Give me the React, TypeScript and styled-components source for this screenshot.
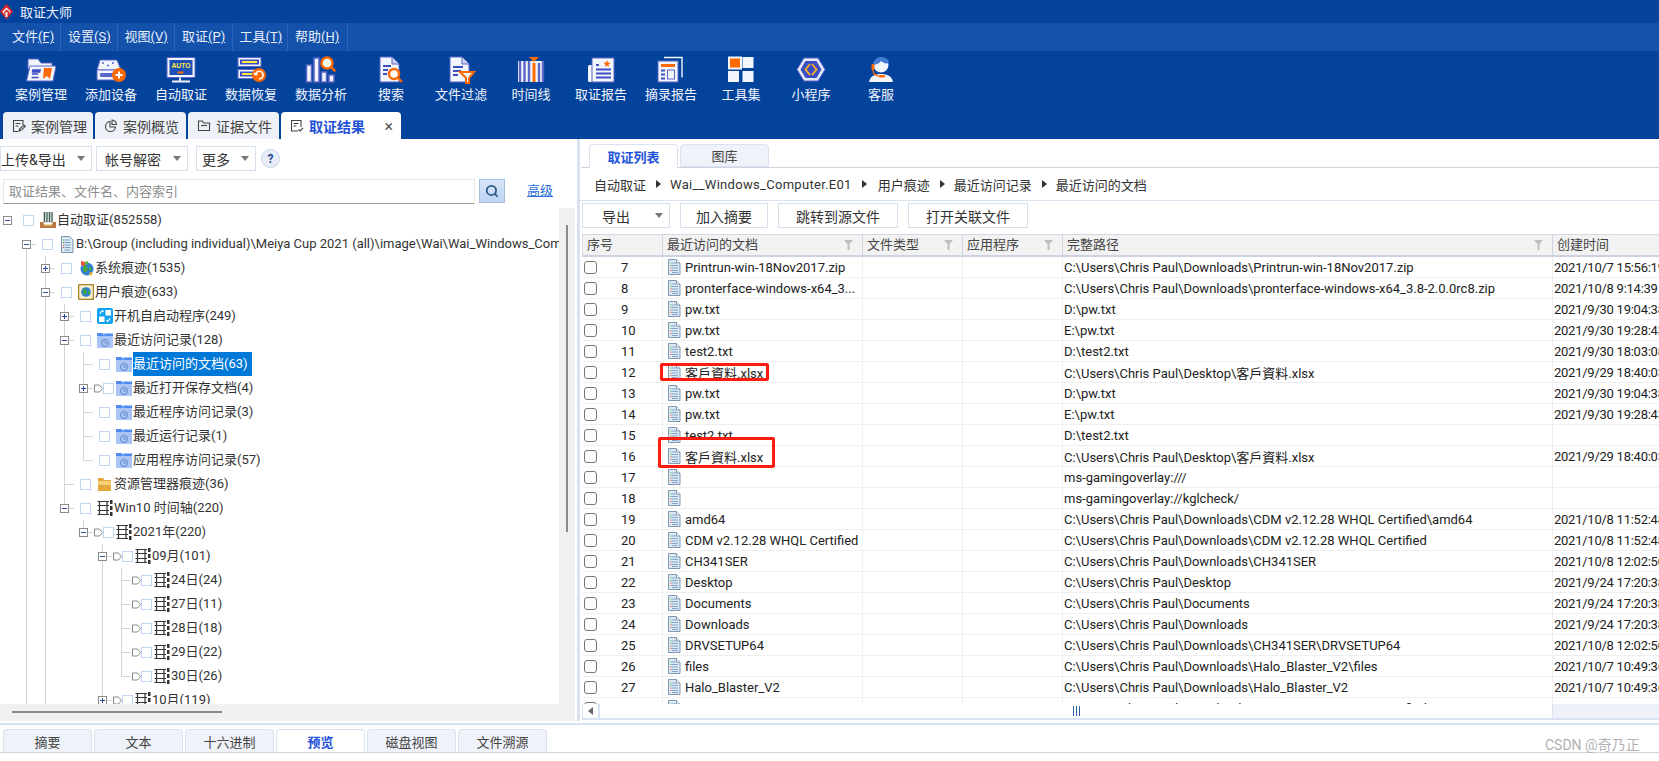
import React from "react";
import styled, { createGlobalStyle } from "styled-components";
import { Search } from "lucide-react";

const FONT = `Roboto, "Noto Sans CJK SC", sans-serif`;
const W = "#f3f5fd";
const I = "#5a66c8";
const D = "#3c4ec4";
const O = "#ff6a00";

const Global = createGlobalStyle`
  html, body { margin: 0; padding: 0; background: #fff; }
  body { font-family: ${FONT}; font-size: 13px; color: #333; }
  * { box-sizing: border-box; }
`;

const Page = styled.div`
  position: relative;
  width: 1659px;
  height: 761px;
  overflow: hidden;
  display: flex;
  flex-direction: column;
  background: #fff;
`;
const TitleBar = styled.div`
  height: 23px;
  background: #03439c;
  color: #eef2fb;
  display: flex;
  align-items: center;
  font-size: 13px;
`;
const TitleText = styled.span`
  margin-left: 7px;
`;
const MenuBar = styled.div`
  height: 28px;
  background: #1351ab;
  display: flex;
  padding-left: 5px;
`;
const MenuItem = styled.div`
  padding: 0 7px;
  line-height: 28px;
  color: #eaf0fc;
  font-size: 13px;
  border-right: 1px solid #2b64b8;
  white-space: nowrap;
  width: ${(p: { $w: number }) => p.$w}px;
`;
const ToolBar = styled.div`
  height: 61px;
  background: #03439c;
  display: flex;
  padding: 4px 0 0 6px;
`;
const ToolButton = styled.div`
  width: 70px;
  display: flex;
  flex-direction: column;
  align-items: center;
`;
const ToolLabel = styled.span`
  margin-top: 2px;
  color: #f2f5fd;
  font-size: 13px;
  line-height: 18px;
`;
const TabStrip = styled.div`
  height: 27px;
  background: #03439c;
  display: flex;
  gap: 2px;
  padding-left: 3px;
`;
const TopTab = styled.div<{ $active?: boolean; $w: number }>`
  width: ${(p) => p.$w}px;
  background: ${(p) => (p.$active ? "#fff" : "#eef1f7")};
  border-radius: 4px 4px 0 0;
  display: flex;
  align-items: center;
  padding: 1px 0 0 9px;
  gap: 5px;
  font-size: 14px;
  font-weight: ${(p) => (p.$active ? 700 : 400)};
  color: ${(p) => (p.$active ? "#1f52d8" : "#444")};
`;
const CloseMark = styled.span`
  margin-left: auto;
  margin-right: 8px;
  font-weight: 400;
  color: #555;
  font-size: 16px;
`;
const Main = styled.div`
  height: 582px;
  display: flex;
`;
const LeftPanel = styled.div`
  width: 577px;
  display: flex;
  flex-direction: column;
  flex: none;
`;
const Splitter = styled.div`
  width: 3px;
  flex: none;
  background: #d8e2f3;
`;
const LeftTools = styled.div`
  display: flex;
  align-items: center;
  margin-top: 7px;
  height: 25px;
`;
const Drop = styled.div<{ $w: number; $ml: number; $pl: number }>`
  width: ${(p) => p.$w}px;
  margin-left: ${(p) => p.$ml}px;
  padding-left: ${(p) => p.$pl}px;
  height: 25px;
  border: 1px solid #d5dfee;
  display: flex;
  align-items: center;
  font-size: 14px;
  color: #333;
  white-space: nowrap;
`;
const Caret = styled.i`
  margin-left: auto;
  margin-right: 6px;
  width: 0;
  height: 0;
  border-left: 4.5px solid transparent;
  border-right: 4.5px solid transparent;
  border-top: 5px solid #777;
`;
const HelpBtn = styled.div`
  width: 19px;
  height: 19px;
  margin-left: 5px;
  border-radius: 50%;
  background: #e8eef8;
  border: 1px solid #c6d3e8;
  color: #234a8c;
  font-weight: 700;
  font-size: 12px;
  display: flex;
  align-items: center;
  justify-content: center;
`;
const SearchRow = styled.div`
  display: flex;
  align-items: flex-start;
  margin-top: 8px;
  height: 25px;
  padding-left: 3px;
`;
const SearchInput = styled.input`
  width: 472px;
  height: 25px;
  border: 1px solid #e6e6e6;
  border-bottom-color: #9a9a9a;
  padding: 0 5px;
  font: 13px ${FONT};
  outline: none;
  &::placeholder { color: #8d8d8d; opacity: 1; }
`;
const SearchBtn = styled.div`
  width: 26px;
  height: 24px;
  margin-left: 4px;
  border: 1px solid #a3bfe0;
  background: linear-gradient(#d9e6f8, #bdd3f2);
  color: #2c5a88;
  display: flex;
  align-items: center;
  justify-content: center;
`;
const AdvancedLink = styled.a`
  margin-left: 22px;
  color: #2a6fd8;
  font-size: 13px;
  line-height: 24px;
  text-decoration: underline;
`;
const TreeArea = styled.div`
  margin-top: 4px;
  display: flex;
  height: 496px;
`;
const TreeView = styled.div`
  width: 559px;
  overflow: hidden;
  flex: none;
`;
const VTrack = styled.div`
  width: 16px;
  background: #f0f0f0;
  padding: 17px 0 0 7px;
`;
const VThumb = styled.div`
  width: 2px;
  height: 307px;
  background: #8a8a8a;
`;
const HTrack = styled.div`
  width: 575px;
  height: 17px;
  background: #f0f0f0;
  padding: 7px 0 0 12px;
`;
const HThumb = styled.div`
  width: 210px;
  height: 2px;
  background: #8a8a8a;
`;
const TreeRow = styled.div<{ $level: number }>`
  position: relative;
  height: 24px;
  display: flex;
  align-items: center;
  padding-left: ${(p) => 3 + p.$level * 19}px;
  white-space: nowrap;
  color: #333;
`;
const Guide = styled.i<{ $part: "full" | "top" | "bottom" }>`
  position: absolute;
  width: 1px;
  background: #d6d6d6;
  top: ${(p) => (p.$part === "bottom" ? "12px" : "0")};
  bottom: ${(p) => (p.$part === "top" ? "12px" : "0")};
`;
const Tick = styled.i`
  position: absolute;
  top: 12px;
  width: 10px;
  height: 1px;
  background: #d6d6d6;
`;
const Expander = styled.span<{ $open?: boolean; $hidden?: boolean }>`
  position: relative;
  width: 9px;
  height: 9px;
  flex: none;
  border: 1px solid ${(p) => (p.$hidden ? "transparent" : "#8a8a8a")};
  background: ${(p) => (p.$hidden ? "transparent" : "#fff")};
  &::before {
    content: "";
    display: ${(p) => (p.$hidden ? "none" : "block")};
    position: absolute;
    left: 1px;
    top: 3px;
    width: 5px;
    height: 1px;
    background: #2d4a9e;
  }
  &::after {
    content: "";
    display: ${(p) => (p.$hidden || p.$open ? "none" : "block")};
    position: absolute;
    left: 3px;
    top: 1px;
    width: 1px;
    height: 5px;
    background: #2d4a9e;
  }
`;
const TreeCheck = styled.span<{ $tagged?: boolean }>`
  position: relative;
  width: 11px;
  height: 11px;
  flex: none;
  background: #fff;
  border: 1px solid #c3d4f6;
  margin-left: ${(p) => (p.$tagged ? 0 : 11)}px;
  margin-right: ${(p) => (p.$tagged ? 2 : 6)}px;
`;
const TagSlot = styled.span`
  position: relative;
  width: 9px;
  height: 9px;
  margin-left: 6px;
  display: flex;
  flex: none;
`;
const NodeIcon = styled.span`
  position: relative;
  width: 16px;
  height: 16px;
  flex: none;
  display: flex;
`;
const NodeLabel = styled.span<{ $selected?: boolean }>`
  position: relative;
  margin-left: 1px;
  height: 24px;
  line-height: 24px;
  padding-right: ${(p) => (p.$selected ? 4 : 0)}px;
  background: ${(p) => (p.$selected ? "#0078d7" : "transparent")};
  color: ${(p) => (p.$selected ? "#fff" : "#333")};
`;
const RightPanel = styled.div`
  flex: 1;
  min-width: 0;
  display: flex;
  flex-direction: column;
`;
const SubTabs = styled.div`
  margin-top: 5px;
  height: 24px;
  display: flex;
  gap: 2px;
  padding-left: 8px;
  margin-left: 1px;
  border-bottom: 1px solid #cfd3df;
`;
const SubTab = styled.div<{ $active?: boolean }>`
  width: 89px;
  height: ${(p) => (p.$active ? 24 : 23)}px;
  border: 1px solid #d8e2f0;
  border-bottom: ${(p) => (p.$active ? "none" : "1px solid #d8e2f0")};
  border-radius: 4px 4px 0 0;
  background: ${(p) => (p.$active ? "#fff" : "#eff2f8")};
  color: ${(p) => (p.$active ? "#1f52d8" : "#444")};
  font-weight: ${(p) => (p.$active ? 700 : 400)};
  display: flex;
  align-items: center;
  justify-content: center;
`;
const Crumbs = styled.div`
  height: 33px;
  display: flex;
  align-items: center;
  padding-left: 14px;
  border-bottom: 1px solid #d8e2f0;
  color: #333;
`;
const CrumbFile = styled.span`
  letter-spacing: 0.3px;
`;
const CrumbArrow = styled.i<{ $wide?: boolean }>`
  width: 0;
  height: 0;
  margin: 0 ${(p) => (p.$wide ? 11 : 9)}px 0 ${(p) => (p.$wide ? 10 : 10)}px;
  border-top: 4px solid transparent;
  border-bottom: 4px solid transparent;
  border-left: 5px solid #333;
`;
const ActionRow = styled.div`
  display: flex;
  gap: 10px;
  padding-left: 2px;
  margin-top: 2px;
  height: 25px;
`;
const ActionBtn = styled.div<{ $w: number }>`
  width: ${(p) => p.$w}px;
  border: 1px solid #d5dfee;
  display: flex;
  align-items: center;
  justify-content: center;
  font-size: 14px;
  color: #333;
`;
const ExportBtn = styled(ActionBtn)`
  justify-content: flex-start;
  padding-left: 19px;
`;
const Table = styled.div`
  margin: 6px 0 0 2px;
  overflow: hidden;
  display: flex;
  flex-direction: column;
`;
const COLS = "80px 200px 100px 100px 490px 120px";
const HeadRow = styled.div`
  display: grid;
  grid-template-columns: ${COLS};
  height: 23px;
  background: #f2f2f2;
  border-top: 1px solid #d5d8e2;
  border-bottom: 2px solid #cdd2e2;
`;
const HeadCell = styled.div<{ $first?: boolean }>`
  position: relative;
  display: flex;
  align-items: center;
  padding-left: 4px;
  padding-right: 9px;
  justify-content: space-between;
  color: #444;
  line-height: 20px;
  white-space: nowrap;
  border-left: 1px solid ${(p) => (p.$first ? "#dde0e8" : "#cfd3e2")};
`;
const Funnel = styled.svg`
  flex: none;
`;
const TableBody = styled.div`
  position: relative;
  height: 447px;
  overflow: hidden;
`;
const Row = styled.div`
  display: grid;
  grid-template-columns: ${COLS};
  height: 21px;
  border-bottom: 1px solid #efefef;
  color: #222;
`;
const Cell = styled.div<{ $pl?: number }>`
  display: flex;
  align-items: center;
  padding-left: ${(p) => p.$pl ?? 1}px;
  border-left: 1px solid #efefef;
  white-space: nowrap;
  overflow: hidden;
`;
const DateCell = styled(Cell)`
  letter-spacing: -0.25px;
`;
const IndexCell = styled.div`
  display: flex;
  align-items: center;
  padding-left: 2px;
`;
const RowCheck = styled.span`
  width: 13px;
  height: 13px;
  border: 1px solid #777;
  border-radius: 3px;
  background: #fdfdfd;
  flex: none;
`;
const RowNumber = styled.span`
  margin-left: 24px;
`;
const IconSlot = styled.span`
  display: flex;
  flex: none;
`;
const FileName = styled.span`
  margin-left: 4px;
`;
const Highlight = styled.div<{ $l: number; $t: number; $w: number; $h: number }>`
  position: absolute;
  left: ${(p) => p.$l}px;
  top: ${(p) => p.$t}px;
  width: ${(p) => p.$w}px;
  height: ${(p) => p.$h}px;
  border: 3px solid #fb1c0e;
  border-radius: 2px;
`;
const TableScroll = styled.div`
  margin-left: 2px;
  height: 16px;
  display: flex;
  border-bottom: 2px solid #d8e2f3;
  border-left: 1px solid #d8e2f3;
`;
const ScrollArrow = styled.div`
  width: 17px;
  flex: none;
  border-right: 2px solid #d8e2f3;
  display: flex;
  align-items: center;
  justify-content: center;
  &::before {
    content: "";
    border-top: 4px solid transparent;
    border-bottom: 4px solid transparent;
    border-right: 5px solid #666;
  }
`;
const ScrollThumb = styled.div`
  width: 952px;
  flex: none;
  display: flex;
  align-items: center;
  justify-content: center;
  gap: 2px;
`;
const Grip = styled.i`
  width: 1px;
  height: 10px;
  background: #2b5ea8;
`;
const ScrollRest = styled.div`
  flex: 1;
  background: #eef1f8;
  border-left: 1px solid #d8e2f3;
`;
const Divider = styled.div`
  height: 2px;
  margin-top: 2px;
  background: #d8e2f3;
`;
const BottomTabs = styled.div`
  margin-top: 4px;
  height: 24px;
  display: flex;
  gap: 2px;
  padding-left: 3px;
  border-bottom: 1px solid #cfd3df;
`;
const BottomTab = styled.div<{ $active?: boolean }>`
  width: 89px;
  height: 23px;
  border: 1px solid #d8e2f0;
  border-bottom: none;
  border-radius: 4px 4px 0 0;
  background: ${(p) => (p.$active ? "#fff" : "#eff2f8")};
  color: ${(p) => (p.$active ? "#1f52d8" : "#444")};
  font-weight: ${(p) => (p.$active ? 700 : 400)};
  font-size: 13px;
  display: flex;
  align-items: center;
  justify-content: center;
`;
const Watermark = styled.div`
  position: absolute;
  left: 1545px;
  top: 735px;
  font-size: 14px;
  line-height: 20px;
  color: #b2b2b2;
  white-space: nowrap;
`;

const Logo = () => (
  <svg width="13" height="16" viewBox="0 0 13 16">
    <path d="M6.500 0L13 7.500 6.500 15.500 0 7.500z" fill="#d8232a" />
    <path d="M2.500 7.500L6.500 3.500l4 4-1 2.500V7.800L6.500 5.500 4.200 7.800V10.500zM5.500 8h2v5h-2z" fill="#fff" />
  </svg>
);

const S = ({ children }: { children: React.ReactNode }) => (
  <svg width="32" height="29" viewBox="0 0 32 29">{children}</svg>
);

const MagGlass = ({ x, y, r = 5.5 }: { x: number; y: number; r?: number }) => (
  <g>
    <circle cx={x} cy={y} r={r} fill="#fff" stroke={O} strokeWidth="2.4" />
    <path d={`M${x + r * 0.7} ${y + r * 0.7}l4.5 4.5`} stroke={O} strokeWidth="2.4" />
  </g>
);

const DocShape = () => (
  <g>
    <path d="M5 2h12l7 7v18H5z" fill={W} stroke={I} />
    <path d="M17 2v7h7" fill="#cfd4f0" stroke={I} />
  </g>
);

const toolIcons: Record<string, React.ReactNode> = {
  case: (
    <S>
      <path d="M3 4h10l3 4h11v6H3z" fill={W} stroke={I} />
      <path d="M5 11h26l-3 15H1.500z" fill={W} stroke={I} />
      <path d="M8 15h7l-.4 2H7.600zM7 19h6M6.600 22.500h7" stroke={D} strokeWidth="1.6" fill={D} />
      <path d="M19 13h8l-2 11-3-3-4 3z" fill={O} />
    </S>
  ),
  device: (
    <S>
      <path d="M5 5h17l4 10H2z" fill={W} stroke={I} />
      <rect x="2" y="15" width="24" height="10" fill={W} stroke={I} />
      <rect x="5" y="18" width="13" height="4" rx="1" fill={I} />
      <circle cx="8" cy="8" r="1" fill={I} />
      <circle cx="18" cy="8" r="1" fill={I} />
      <circle cx="13" cy="10.500" r="1" fill={I} />
      <circle cx="24" cy="20" r="7" fill={O} />
      <path d="M24 16.500v7M20.500 20h7" stroke="#fff" strokeWidth="2" />
    </S>
  ),
  auto: (
    <S>
      <rect x="2" y="2.500" width="28" height="20" fill={W} stroke={I} />
      <rect x="4.500" y="5" width="23" height="15" fill="#1c4fb8" />
      <text x="16" y="13" textAnchor="middle" fontFamily="Liberation Sans" fontSize="6.800" fontWeight="700" fill="#ffe93a">AUTO</text>
      <rect x="12.500" y="16.500" width="6" height="2" fill={O} />
      <path d="M15 22.500v3M7 26.500h18" stroke={W} strokeWidth="1.800" />
    </S>
  ),
  restore: (
    <S>
      <rect x="3" y="2.500" width="23" height="9" fill={W} stroke={I} />
      <rect x="5" y="4.500" width="19" height="5" fill={D} />
      <rect x="7" y="6" width="15" height="2" fill="#ffe93a" />
      <rect x="3" y="14.500" width="23" height="9" fill={W} stroke={I} />
      <rect x="5" y="16.500" width="19" height="5" fill={D} />
      <rect x="7" y="18" width="10" height="2" fill="#ffe93a" />
      <circle cx="24" cy="20" r="7" fill={O} />
      <path d="M20.500 20a3.800 3.800 0 1 1 3.500 3.800M20.500 20l-1.500-2M20.500 20l2-1.500" stroke="#fff" strokeWidth="1.600" fill="none" />
    </S>
  ),
  analysis: (
    <S>
      <rect x="1.500" y="10" width="5" height="17" fill={W} stroke={I} strokeWidth="1.500" />
      <rect x="9" y="3" width="5" height="24" fill={W} stroke={I} strokeWidth="1.500" />
      <rect x="16.500" y="17" width="5" height="10" fill={W} stroke={I} strokeWidth="1.500" />
      <rect x="24" y="20" width="5" height="7" fill={W} stroke={I} strokeWidth="1.500" />
      <MagGlass x={22} y={8} r={5.5} />
    </S>
  ),
  search: (
    <S>
      <DocShape />
      <path d="M8 11h8M8 15h5M8 19h4" stroke={D} strokeWidth="1.800" />
      <MagGlass x={19} y={19} r={5} />
    </S>
  ),
  filter: (
    <S>
      <DocShape />
      <path d="M8 12h10M8 16h8M8 20h5" stroke={D} strokeWidth="1.800" />
      <path d="M15 17h14l-5 6v5h-3v-5z" fill={W} stroke={O} strokeWidth="2" />
    </S>
  ),
  timeline: (
    <S>
      <rect x="3" y="6" width="26" height="21" fill={W} />
      <path d="M5 6v21M9.500 6v21M14 6v21M24 8v19M28 6v21" stroke={I} strokeWidth="2.400" />
      <path d="M19 8v19" stroke={O} strokeWidth="3" />
      <path d="M14 2h10l-5 5z" fill={O} />
    </S>
  ),
  report: (
    <S>
      <rect x="3" y="10" width="6" height="17" rx="1.500" fill={W} />
      <rect x="7" y="3" width="22" height="24" fill={W} stroke={I} />
      <path d="M22 5l1 2.500 2.500.2-2 1.700.7 2.500-2.200-1.400-2.200 1.400.7-2.500-2-1.700 2.500-.2z" fill={O} />
      <path d="M11 10h3M11 14.500h15M11 18.500h15M11 22.500h15" stroke={D} strokeWidth="1.800" />
    </S>
  ),
  excerpt: (
    <S>
      <path d="M9 2.500h18v20" fill="none" stroke={W} strokeWidth="1.400" />
      <rect x="3" y="6" width="20" height="21" fill={W} stroke={I} />
      <rect x="6" y="9" width="14" height="3" fill={O} />
      <path d="M6 15.500h4M6 19.500h4M6 23.500h4" stroke={D} strokeWidth="1.800" />
      <rect x="12.500" y="15" width="7" height="9" fill={W} stroke={I} />
    </S>
  ),
  tools: (
    <S>
      <rect x="4" y="2.500" width="12" height="11" fill={O} stroke={W} strokeWidth="2" />
      <rect x="17.500" y="2" width="11" height="11" fill={W} />
      <rect x="3" y="16" width="11" height="11" fill={W} />
      <rect x="17.500" y="16" width="11" height="11" fill={W} />
    </S>
  ),
  mini: (
    <S>
      <path d="M9 3h14l7 11.500L23 26H9L2 14.500z" fill="#e4eafa" stroke={I} />
      <path d="M10.500 6h11l5 8.500-5 8.500h-11l-5-8.500z" fill={D} />
      <path d="M15 9l-4.500 5.500L15 20M17 9l4.500 5.500L17 20" stroke="#ffb020" strokeWidth="1.800" fill="none" />
    </S>
  ),
  service: (
    <S>
      <path d="M4 27c1-6 6-8 12-8s11 2 12 8z" fill={W} />
      <circle cx="16" cy="10" r="7.500" fill={W} />
      <path d="M9 10c0-5 3-8 7.500-8S24 5 24 8c-3 1-6 0-8-2-1 2-4 3-7 4z" fill="#3f7bd0" />
      <rect x="6.500" y="9" width="3" height="6" rx="1" fill={O} />
      <path d="M8 15c0 4 3 6 7 6" stroke={O} strokeWidth="1.200" fill="none" />
      <rect x="14" y="20" width="6" height="2.400" rx="1" fill={O} />
    </S>
  ),
};

const toolItems: [string, string][] = [
  ["case", "案例管理"],
  ["device", "添加设备"],
  ["auto", "自动取证"],
  ["restore", "数据恢复"],
  ["analysis", "数据分析"],
  ["search", "搜索"],
  ["filter", "文件过滤"],
  ["timeline", "时间线"],
  ["report", "取证报告"],
  ["excerpt", "摘录报告"],
  ["tools", "工具集"],
  ["mini", "小程序"],
  ["service", "客服"],
];

const menus: [string, string, number][] = [
  ["文件", "(F)", 56],
  ["设置", "(S)", 56.5],
  ["视图", "(V)", 57.5],
  ["取证", "(P)", 57.5],
  ["工具", "(T)", 55.5],
  ["帮助", "(H)", 59.5],
];

const TS = ({ children }: { children: React.ReactNode }) => (
  <svg width="14" height="14" viewBox="0 0 14 14" fill="none" stroke="#444" strokeWidth="1.100">
    {children}
  </svg>
);

const topTabs: { label: string; w: number; active?: boolean; icon: React.ReactNode }[] = [
  {
    label: "案例管理",
    w: 90,
    icon: (
      <TS>
        <path d="M11 6V1.500H1.500v11H6M3.500 4.500h5M3.500 7h3" />
        <path d="M7 12l.5-2 4.500-4 1.300 1.300-4.500 4z" />
      </TS>
    ),
  },
  {
    label: "案例概览",
    w: 91,
    icon: (
      <TS>
        <path d="M6 2.500a5 5 0 1 0 5.500 5.500H6z" />
        <path d="M8 1a5 5 0 0 1 4.500 4.500H8z" />
      </TS>
    ),
  },
  {
    label: "证据文件",
    w: 91,
    icon: (
      <TS>
        <path d="M1.500 11.500V2h4l1 2h6v7.500z" />
        <path d="M4 6.500h6" />
      </TS>
    ),
  },
  {
    label: "取证结果",
    w: 120,
    active: true,
    icon: (
      <TS>
        <path d="M8 12H1.500V1.500h9.500V8M3.500 4.500h5M3.500 7h3" />
        <path d="M8.500 10.500l1.500 1.500 3-3" />
      </TS>
    ),
  },
];

const FolderClock = () => (
  <svg width="16" height="16" viewBox="0 0 16 16">
    <path d="M0 1h6l1.500 2H16v13H0z" fill="#a9c4f5" />
    <path d="M0 1h5.500L7 4H0zM7 1.500h9V4H7.500z" fill="#4f8cf0" />
    <circle cx="8" cy="11" r="3.500" fill="none" stroke="#5f86c8" />
    <path d="M8 9.200V11h1.800" stroke="#5f86c8" fill="none" />
  </svg>
);
const TimelineIcon = () => (
  <svg width="16" height="16" viewBox="0 0 16 16">
    <path d="M.5 1.500h11.500M.5 14.500h11.500M2.500 1.500v3.500M10 1.500v3.500M.5 5.500h11.500M.5 10.500h11.500M2.500 5.500v5M10 5.500v5M2.500 11v3.500M10 11v3.500" stroke="#333" strokeWidth="1.200" fill="none" />
    <path d="M13 0h2.500v4H13zM13 6h2.500v4H13zM13 12h2.500v4H13z" fill="#333" />
  </svg>
);
const treeIcons: Record<string, React.ReactNode> = {
  auto: (
    <svg width="16" height="16" viewBox="0 0 16 16">
      <rect x="3" y="0" width="10" height="11" fill="#d8dcdc" />
      <path d="M4.500 0v10M7 0v10M9.500 0v10M12 0v10" stroke="#3c5a4c" strokeWidth="1.200" />
      <path d="M0 10h3l1 2h8l1-2h3v6H0z" fill="#b97a3c" />
      <path d="M4 12h8v1.500H4z" fill="#f5d9a8" />
    </svg>
  ),
  doc: (
    <svg width="16" height="17" viewBox="0 0 16 17">
      <path d="M2.500.5h8l3.500 3.500v12.500H2.500z" fill="#dce9f3" stroke="#7d8fa5" />
      <path d="M5.500 4h5M5.500 6.500h6M5.500 9h6M5.500 11.500h6M5.500 14h6" stroke="#7a9fc4" />
      <path d="M4 4h1M4 6.500h1" stroke="#39a845" />
      <path d="M4 9h1M4 11.500h1" stroke="#d84a3a" />
    </svg>
  ),
  globe: (
    <svg width="16" height="16" viewBox="0 0 16 16">
      <circle cx="9" cy="9" r="6.500" fill="#2f7fd6" />
      <path d="M5 5l4 1 1 4-3 3-2-3zM11 7l3 1-1 3-2-1z" fill="#45a53f" />
      <path d="M3 1l4 1v4L3 5z" fill="#e8562e" />
      <path d="M7 2l3-1v3l-3 1z" fill="#5bb447" />
      <path d="M12 12l3 1-2 3-2-2z" fill="#f0b429" />
    </svg>
  ),
  user: (
    <svg width="16" height="16" viewBox="0 0 16 16">
      <rect x=".5" y=".5" width="15" height="15" rx="1.500" fill="#f5edd0" stroke="#a58222" strokeWidth="1.400" />
      <circle cx="8" cy="8" r="4.800" fill="#2f7fd6" />
      <path d="M5 5l3 0 1 3-2 3-2-2zM10 7l2 0 0 3-2 0z" fill="#45a53f" />
    </svg>
  ),
  boot: (
    <svg width="16" height="16" viewBox="0 0 16 16">
      <rect width="16" height="16" rx="2" fill="#12a2ee" />
      <path d="M8.500 2h5.500v5.500H8.500zM2 8.500h5.500v5.500H2z" fill="#fff" />
      <path d="M3 6a3 3 0 0 1 3-3M5 2l1.500 1L5 4.500M13 10a3 3 0 0 1-3 3M11 14l-1.500-1L11 11.500" stroke="#fff" fill="none" />
    </svg>
  ),
  folderClock: <FolderClock />,
  folder: (
    <svg width="16" height="16" viewBox="0 0 16 16">
      <path d="M1 2h5l1.500 2H14v11H1z" fill="#e5a93a" />
      <path d="M1 5h13v4H1z" fill="#f4cf7a" />
    </svg>
  ),
  timeline: <TimelineIcon />,
};

type TreeNode = {
  l: number;
  exp?: "plus" | "minus";
  tag?: boolean;
  icon: string;
  label: string;
  thru?: number[];
  top?: number;
  bottom?: number;
  sel?: boolean;
};

const treeData: TreeNode[] = [
  { l: 0, exp: "minus", icon: "auto", label: "自动取证(852558)" },
  { l: 1, exp: "minus", icon: "doc", label: "B:\\Group (including individual)\\Meiya Cup 2021 (all)\\image\\Wai\\Wai_Windows_Computer.E01", bottom: 1 },
  { l: 2, exp: "plus", icon: "globe", label: "系统痕迹(1535)", thru: [1, 2] },
  { l: 2, exp: "minus", icon: "user", label: "用户痕迹(633)", thru: [1, 2] },
  { l: 3, exp: "plus", icon: "boot", label: "开机自启动程序(249)", thru: [1, 2, 3] },
  { l: 3, exp: "minus", icon: "folderClock", label: "最近访问记录(128)", thru: [1, 2, 3] },
  { l: 4, icon: "folderClock", label: "最近访问的文档(63)", thru: [1, 2, 3, 4], sel: true },
  { l: 4, exp: "plus", tag: true, icon: "folderClock", label: "最近打开保存文档(4)", thru: [1, 2, 3, 4] },
  { l: 4, icon: "folderClock", label: "最近程序访问记录(3)", thru: [1, 2, 3, 4] },
  { l: 4, icon: "folderClock", label: "最近运行记录(1)", thru: [1, 2, 3, 4] },
  { l: 4, icon: "folderClock", label: "应用程序访问记录(57)", thru: [1, 2, 3], top: 4 },
  { l: 3, icon: "folder", label: "资源管理器痕迹(36)", thru: [1, 2, 3] },
  { l: 3, exp: "minus", icon: "timeline", label: "Win10 时间轴(220)", thru: [1, 2], top: 3 },
  { l: 4, exp: "minus", tag: true, icon: "timeline", label: "2021年(220)", thru: [1, 2], top: 4 },
  { l: 5, exp: "minus", tag: true, icon: "timeline", label: "09月(101)", thru: [1, 2, 5] },
  { l: 6, tag: true, icon: "timeline", label: "24日(24)", thru: [1, 2, 5, 6] },
  { l: 6, tag: true, icon: "timeline", label: "27日(11)", thru: [1, 2, 5, 6] },
  { l: 6, tag: true, icon: "timeline", label: "28日(18)", thru: [1, 2, 5, 6] },
  { l: 6, tag: true, icon: "timeline", label: "29日(22)", thru: [1, 2, 5, 6] },
  { l: 6, tag: true, icon: "timeline", label: "30日(26)", thru: [1, 2, 5], top: 6 },
  { l: 5, exp: "plus", tag: true, icon: "timeline", label: "10月(119)", thru: [1, 2], top: 5 },
];

const guideX = (l: number) => 7 + l * 19;

const Tree = () => (
  <TreeView>
    {treeData.map((n) => (
      <TreeRow key={n.label} $level={n.l}>
        {(n.thru ?? []).map((g) => (
          <Guide key={g} $part="full" style={{ left: guideX(g) }} />
        ))}
        {n.top !== undefined && <Guide $part="top" style={{ left: guideX(n.top) }} />}
        {n.bottom !== undefined && <Guide $part="bottom" style={{ left: guideX(n.bottom) }} />}
        {n.l > 0 && <Tick style={{ left: guideX(n.l) }} />}
        <Expander $open={n.exp === "minus"} $hidden={!n.exp} />
        {n.tag && (
          <TagSlot>
            <svg width="9" height="9" viewBox="0 0 9 9">
              <path d="M.5 1h5l3 3.500-3 3.500h-5z" fill="#fff" stroke="#888" />
            </svg>
          </TagSlot>
        )}
        <TreeCheck $tagged={n.tag} />
        <NodeIcon>{treeIcons[n.icon]}</NodeIcon>
        <NodeLabel $selected={n.sel}>{n.label}</NodeLabel>
      </TreeRow>
    ))}
  </TreeView>
);

const FileIcon = () => (
  <IconSlot>
    <svg width="14" height="16" viewBox="0 0 14 16">
      <path d="M1.500.5h8l3.500 3.500v11.500H1.500z" fill="#dce9f3" stroke="#7f97b3" />
      <path d="M9.500.5V4H13" fill="#fff" stroke="#7f97b3" />
      <path d="M5 4h4M5 6.500h6M5 9h6M5 11.500h6M5 13.500h6" stroke="#84a8cc" />
      <path d="M3.500 4h1M3.500 6.500h1" stroke="#39a845" />
      <path d="M3.500 9h1M3.500 11.500h1" stroke="#d84a3a" />
    </svg>
  </IconSlot>
);

const U = "C:\\Users\\Chris Paul\\";
const D1 = U + "Downloads\\";
const rows: [number, string, string, string][] = [
  [7, "Printrun-win-18Nov2017.zip", D1 + "Printrun-win-18Nov2017.zip", "2021/10/7 15:56:19"],
  [8, "pronterface-windows-x64_3...", D1 + "pronterface-windows-x64_3.8-2.0.0rc8.zip", "2021/10/8 9:14:39"],
  [9, "pw.txt", "D:\\pw.txt", "2021/9/30 19:04:38"],
  [10, "pw.txt", "E:\\pw.txt", "2021/9/30 19:28:43"],
  [11, "test2.txt", "D:\\test2.txt", "2021/9/30 18:03:08"],
  [12, "客戶資料.xlsx", U + "Desktop\\客戶資料.xlsx", "2021/9/29 18:40:03"],
  [13, "pw.txt", "D:\\pw.txt", "2021/9/30 19:04:38"],
  [14, "pw.txt", "E:\\pw.txt", "2021/9/30 19:28:43"],
  [15, "test2.txt", "D:\\test2.txt", ""],
  [16, "客戶資料.xlsx", U + "Desktop\\客戶資料.xlsx", "2021/9/29 18:40:03"],
  [17, "", "ms-gamingoverlay:///", ""],
  [18, "", "ms-gamingoverlay://kglcheck/", ""],
  [19, "amd64", D1 + "CDM v2.12.28 WHQL Certified\\amd64", "2021/10/8 11:52:48"],
  [20, "CDM v2.12.28 WHQL Certified", D1 + "CDM v2.12.28 WHQL Certified", "2021/10/8 11:52:48"],
  [21, "CH341SER", D1 + "CH341SER", "2021/10/8 12:02:50"],
  [22, "Desktop", U + "Desktop", "2021/9/24 17:20:38"],
  [23, "Documents", U + "Documents", "2021/9/24 17:20:38"],
  [24, "Downloads", U + "Downloads", "2021/9/24 17:20:38"],
  [25, "DRVSETUP64", D1 + "CH341SER\\DRVSETUP64", "2021/10/8 12:02:50"],
  [26, "files", D1 + "Halo_Blaster_V2\\files", "2021/10/7 10:49:36"],
  [27, "Halo_Blaster_V2", D1 + "Halo_Blaster_V2", "2021/10/7 10:49:36"],
  [28, "ipc", D1 + "CDM v2.12.28 WHQL Certified\\ipc", "2021/10/8 11:52:48"],
];

const FunnelMark = () => (
  <Funnel width="9" height="10" viewBox="0 0 9 10">
    <path d="M0 0h9L5.500 4v6h-2V4z" fill="#bdbdbd" />
  </Funnel>
);

export default function App() {
  return (
    <Page>
      <Global />
      <TitleBar>
        <Logo />
        <TitleText>取证大师</TitleText>
      </TitleBar>
      <MenuBar>
        {menus.map(([a, b, w]) => (
          <MenuItem key={a} $w={w}>
            {a}
            <u>{b}</u>
          </MenuItem>
        ))}
      </MenuBar>
      <ToolBar>
        {toolItems.map(([k, label]) => (
          <ToolButton key={k}>
            {toolIcons[k]}
            <ToolLabel>{label}</ToolLabel>
          </ToolButton>
        ))}
      </ToolBar>
      <TabStrip>
        {topTabs.map((t) => (
          <TopTab key={t.label} $w={t.w} $active={t.active}>
            {t.icon}
            {t.label}
            {t.active && <CloseMark>×</CloseMark>}
          </TopTab>
        ))}
      </TabStrip>
      <Main>
        <LeftPanel>
          <LeftTools>
            <Drop $w={92} $ml={0} $pl={0}>上传&amp;导出<Caret /></Drop>
            <Drop $w={92} $ml={4} $pl={8}>帐号解密<Caret /></Drop>
            <Drop $w={60} $ml={8} $pl={5}>更多<Caret /></Drop>
            <HelpBtn>?</HelpBtn>
          </LeftTools>
          <SearchRow>
            <SearchInput readOnly placeholder="取证结果、文件名、内容索引" />
            <SearchBtn>
              <Search size={14} strokeWidth={3} />
            </SearchBtn>
            <AdvancedLink>高级</AdvancedLink>
          </SearchRow>
          <TreeArea>
            <Tree />
            <VTrack>
              <VThumb />
            </VTrack>
          </TreeArea>
          <HTrack>
            <HThumb />
          </HTrack>
        </LeftPanel>
        <Splitter />
        <RightPanel>
          <SubTabs>
            <SubTab $active>取证列表</SubTab>
            <SubTab>图库</SubTab>
          </SubTabs>
          <Crumbs>
            自动取证
            <CrumbArrow />
            <CrumbFile>Wai__Windows_Computer.E01</CrumbFile>
            <CrumbArrow $wide />
            用户痕迹
            <CrumbArrow />
            最近访问记录
            <CrumbArrow />
            最近访问的文档
          </Crumbs>
          <ActionRow>
            <ExportBtn $w={88}>导出<Caret /></ExportBtn>
            <ActionBtn $w={88}>加入摘要</ActionBtn>
            <ActionBtn $w={120}>跳转到源文件</ActionBtn>
            <ActionBtn $w={120}>打开关联文件</ActionBtn>
          </ActionRow>
          <Table>
            <HeadRow>
              <HeadCell $first>序号</HeadCell>
              <HeadCell>最近访问的文档<FunnelMark /></HeadCell>
              <HeadCell>文件类型<FunnelMark /></HeadCell>
              <HeadCell>应用程序<FunnelMark /></HeadCell>
              <HeadCell>完整路径<FunnelMark /></HeadCell>
              <HeadCell>创建时间</HeadCell>
            </HeadRow>
            <TableBody>
              {rows.map(([n, name, path, date]) => (
                <Row key={n}>
                  <IndexCell>
                    <RowCheck />
                    <RowNumber>{n}</RowNumber>
                  </IndexCell>
                  <Cell $pl={4}>
                    <FileIcon />
                    <FileName>{name}</FileName>
                  </Cell>
                  <Cell />
                  <Cell />
                  <Cell>{path}</Cell>
                  <DateCell>{date}</DateCell>
                </Row>
              ))}
              <Highlight $l={78} $t={106} $w={109} $h={18} />
              <Highlight $l={76} $t={180} $w={117} $h={31} />
            </TableBody>
          </Table>
          <TableScroll>
            <ScrollArrow />
            <ScrollThumb>
              <Grip />
              <Grip />
              <Grip />
            </ScrollThumb>
            <ScrollRest />
          </TableScroll>
        </RightPanel>
      </Main>
      <Divider />
      <BottomTabs>
        <BottomTab>摘要</BottomTab>
        <BottomTab>文本</BottomTab>
        <BottomTab>十六进制</BottomTab>
        <BottomTab $active>预览</BottomTab>
        <BottomTab>磁盘视图</BottomTab>
        <BottomTab>文件溯源</BottomTab>
      </BottomTabs>
      <Watermark>CSDN @奇乃正</Watermark>
    </Page>
  );
}
